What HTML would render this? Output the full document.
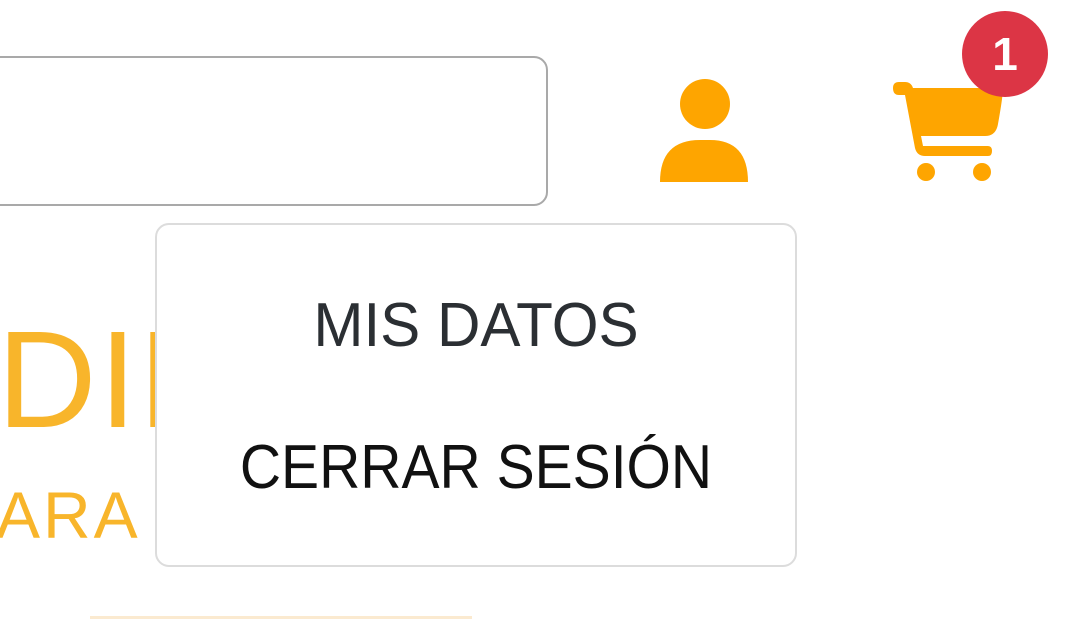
<!DOCTYPE html>
<html><head><style>
body{margin:0;width:1080px;height:632px;overflow:hidden;background:#fff;position:relative;font-family:"Liberation Sans",sans-serif}
.search{position:absolute;left:-30px;top:56px;width:574px;height:146px;border:2px solid #a9a9a9;border-radius:14px}
.big{position:absolute;left:-3px;top:311px;font-size:138px;color:#f8b52b;line-height:1;letter-spacing:2px}
.ara{position:absolute;left:-4px;top:482px;font-size:66px;color:#f8b52b;letter-spacing:3px;line-height:1}
.line{position:absolute;left:90px;top:616px;width:382px;height:3px;background:#fbead0}
.dd{position:absolute;left:155px;top:223px;width:638px;height:340px;border:2px solid #dcdcdc;border-radius:14px;background:#fff}
.t{position:absolute;left:0;width:100%;text-align:center;font-size:62px;line-height:1}
</style></head><body>
<div class="search"></div>
<div class="big">DIR</div>
<div class="ara">ARA</div>
<div class="line"></div>
<div class="dd">
<div class="t" style="top:70px;color:#2b2f33;transform:scaleX(0.97)">MIS DATOS</div>
<div class="t" style="top:212px;color:#111;transform:scaleX(0.92)">CERRAR SESIÓN</div>
</div>
<svg width="1080" height="632" style="position:absolute;left:0;top:0">
<g fill="#fea500">
<circle cx="705" cy="104" r="25"/>
<path d="M660 182 Q660 140 700 140 H710 Q748 140 748 182 Z"/>
<path d="M893 88 Q893 82 899 82 H905 Q911 82 913 88 H1003 Q1003 96 998 124 Q996 136 985 136 H921 L923 146 H988 Q992 146 992 151 Q992 156 988 156 H925 Q917 156 915 148 L905 95 H899 Q893 95 893 88 Z"/>
<circle cx="926" cy="172" r="9"/>
<circle cx="982" cy="172" r="9"/>
</g>
<circle cx="1005" cy="54" r="43" fill="#dc3545"/>
<text x="1005" y="70" text-anchor="middle" font-family="Liberation Sans" font-weight="bold" font-size="46" fill="#fff">1</text>
</svg>
</body></html>
